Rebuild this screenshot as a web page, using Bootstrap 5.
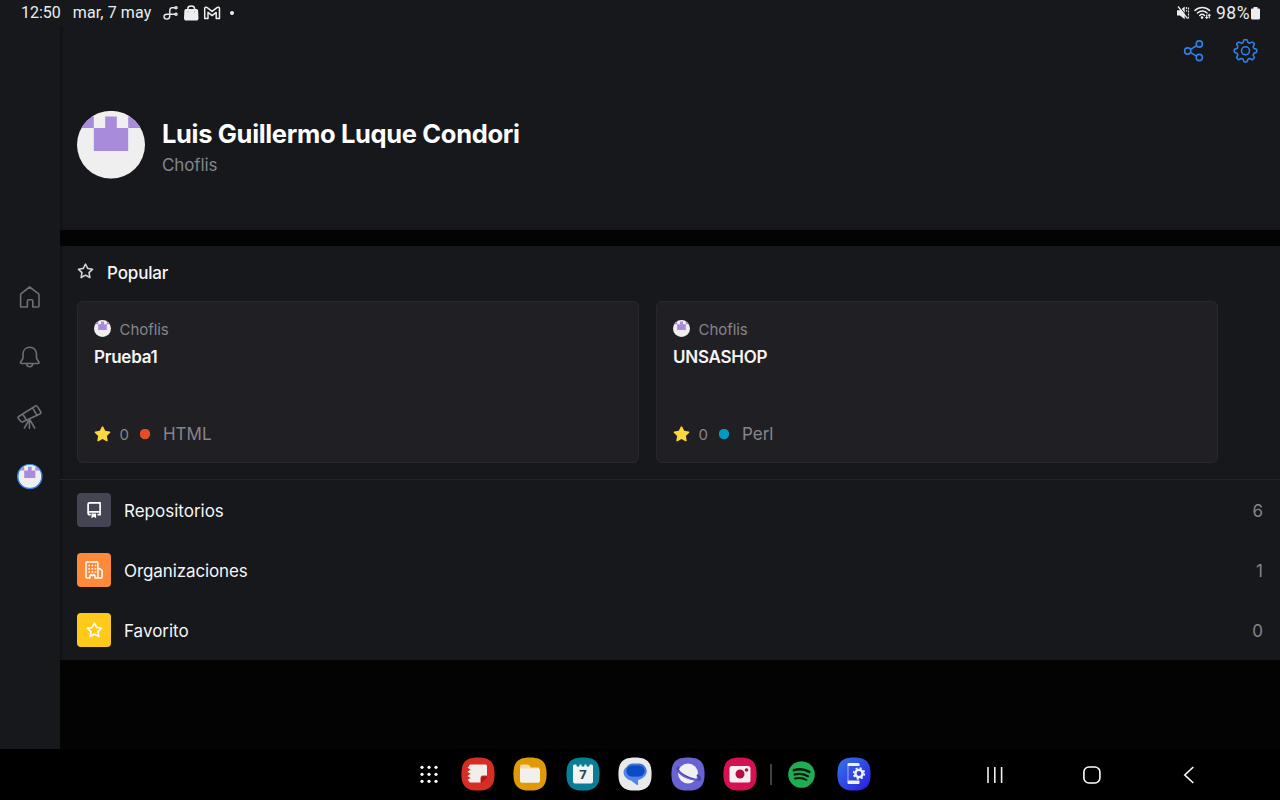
<!DOCTYPE html>
<html lang="es">
<head>
<meta charset="utf-8">
<meta name="viewport" content="width=device-width, initial-scale=1">
<title>Perfil</title>
<link href="https://cdn.jsdelivr.net/npm/bootstrap@5.3.0/dist/css/bootstrap.min.css" rel="stylesheet">
<style>
body{width:1280px;height:800px;overflow:hidden;background:#030303;color:#f5f5f7;font-family:Inter,Roboto,sans-serif;font-size:17px;line-height:24px}
svg{display:block;flex:none}
.surface{background:#17181c}
.statusbar{height:26px;padding:0 20px 0 21px;font-family:Roboto,sans-serif;font-size:16px;color:#ececee}
.percent{font-size:17.500px;letter-spacing:.5px;margin:0 1px 0 2px}
.rail{width:60px;padding-top:259px;gap:33.500px;color:#6e6d78}
.pane{box-shadow:inset 3px 0 2px -1px #101115}
.profile{height:204px;padding:24px 0 0 17px}
.tools{position:absolute;top:12px;right:22px;color:#2f81e8}
.fullname{font-size:25.500px;line-height:32px;font-weight:700;letter-spacing:-.34px;color:#fff}
.dim{color:#85858c}
.band{height:16px;background:#030303}
.popular{height:234px;padding:14px 0 0 17px;border-bottom:1px solid #25262b}
.repo{width:562px;height:162px;background:#201f24;border:1px solid #29282e;border-radius:6px;padding:15px 16px 16px}
.owner{font-size:15px;line-height:24px}
.owner svg{margin-top:-1px;margin-right:8.500px}
.owner span{margin:1px 0 -1px;letter-spacing:-.05px}
.reponame{font-size:17px;line-height:24px;font-weight:600;margin-top:4px;letter-spacing:-.25px}
.dot{width:11px;height:11px}
.entry{height:60px;padding:0 17px}
.entry span{margin-top:2px}
.tile{width:34px;height:34px;border-radius:4px;color:#fff}
.taskbar{height:51px;background:#000}
</style>
</head>
<body class="d-flex flex-column">
<svg width="0" height="0" class="position-absolute">
  <symbol id="avatar" viewBox="0 0 68 68">
    <clipPath id="round"><circle cx="34" cy="34" r="34"/></clipPath>
    <g clip-path="url(#round)"><path fill="#efefef" d="M0 0h68v68H0z"/><path fill="#a98bdb" d="M0 5.700h16.800v11.600H0zM51.200 5.700H68v11.600H51.200zM28.200 5.700h11.600v11.600h11.400v23H16.800v-23h11.400z"/></g>
  </symbol>
  <symbol id="star" viewBox="0 0 16 16"><path fill="currentColor" fill-rule="evenodd" d="M8 .25a.75.75 0 0 1 .673.418l1.882 3.815 4.21.612a.75.75 0 0 1 .416 1.279l-3.046 2.970.719 4.192a.751.751 0 0 1-1.088.791L8 12.347l-3.766 1.980a.75.75 0 0 1-1.088-.79l.72-4.194L.818 6.374a.75.75 0 0 1 .416-1.280l4.210-.611L7.327.668A.75.75 0 0 1 8 .25Zm0 2.445L6.615 5.500a.75.75 0 0 1-.564.41l-3.097.45 2.240 2.184a.75.75 0 0 1 .216.664l-.528 3.084 2.769-1.456a.75.75 0 0 1 .698 0l2.770 1.456-.53-3.084a.75.75 0 0 1 .216-.664l2.240-2.183-3.096-.45a.75.75 0 0 1-.564-.41L8 2.694Z"/></symbol>
  <symbol id="starfill" viewBox="0 0 16 16"><path fill="#fdd73f" d="M8 .25a.75.75 0 0 1 .673.418l1.882 3.815 4.210.612a.75.75 0 0 1 .416 1.279l-3.046 2.970.719 4.192a.751.751 0 0 1-1.088.791L8 12.347l-3.766 1.980a.75.75 0 0 1-1.088-.79l.72-4.194L.818 6.374a.75.75 0 0 1 .416-1.280l4.210-.611L7.327.668A.75.75 0 0 1 8 .25Z"/></symbol>
  <symbol id="squircle" viewBox="0 0 34 34"><path d="M17 .4C29 .4 33.600 5 33.600 17S29 33.600 17 33.600.4 29 .4 17 5 .4 17 .4Z"/></symbol>
</svg>

<header class="statusbar surface d-flex align-items-center flex-shrink-0">
  <span>12:50</span><span style="margin-left:12px;letter-spacing:.1px">mar, 7 may</span>
  <svg style="margin-left:7px" width="80" height="18" viewBox="159 4 80 18" fill="none">
    <g stroke="#e8e8e8" stroke-width="1.400"><path d="M176.300 7.800h-3.300c-2 0-2.200 1.400-2.200 3v5c0 2-1 3.300-2.900 3.300-1.700 0-2.900-1-2.900-2.500s1.200-2.300 2.900-2.300h8.300"/><circle cx="177" cy="7.800" r="1.100"/><circle cx="177" cy="14.300" r="1.100"/></g>
    <path fill="#eee" d="M187.400 9h9.700c1.200 0 1.900.5 2 1.600l.4 7.200c.1 2-.9 2.800-2.500 2.800h-9.500c-1.600 0-2.600-.8-2.500-2.800l.4-7.200c.1-1.100.8-1.600 2-1.600Z"/>
    <path stroke="#eee" stroke-width="1.500" d="M188.800 10V8.800c0-3.600 6.800-3.600 6.800 0V10"/><path stroke="#999" d="M189 11.300v1M195.500 11.300v1"/>
    <path stroke="#eee" stroke-width="1.500" stroke-linejoin="round" d="M205.700 18.600V8.600c0-1.400 1.500-1.800 2.500-1l4.900 3.800 4.900-3.800c1-.8 2.500-.4 2.500 1v10h-3.300v-6.200l-4.100 3.200-4.100-3.200v6.200Z"/>
    <circle cx="233" cy="13" r="2" fill="#eee"/>
  </svg>
  <div class="d-flex align-items-center ms-auto">
    <svg width="38" height="18" viewBox="1175 4 38 18" fill="none">
      <path fill="#eee" d="M1176 10.300h3l4.700-3.800v12.700l-4.700-3.800h-3z"/><path stroke="#17181c" stroke-width="1" d="m1178.500 6.500 9 12"/><path stroke="#eee" stroke-width="1.300" d="m1177 6.500 9.600 12.200"/><path stroke="#ddd" stroke-width="1.200" d="M1185.500 7v4.500M1187.500 7.500v11" stroke-dasharray="2 1"/>
      <g stroke="#eee" stroke-width="1.500" stroke-linecap="round"><path d="M1194 10.400c4-4 10.500-4 14.500 0M1196.400 13c2.800-2.800 7-2.800 9.700 0M1198.700 15.500c1.500-1.500 3.300-1.500 4.800 0"/></g>
      <circle cx="1201" cy="17.600" r="1.300" fill="#eee"/><path fill="#eee" d="m1205.700 19.300-1.800-2.200h1.200v-2.600h1.200v2.600h1.200zM1208.300 13.500l1.800 2.200h-1.200v2.600h-1.200v-2.600h-1.200z"/>
    </svg>
    <span class="percent">98%</span>
    <svg width="9" height="13" viewBox="0 0 9 13"><path fill="#eee" d="M2.500 0h4v1.500H8q1 0 1 1V11q0 1.500-1.500 1.500h-6Q0 12.500 0 11V2.500q0-1 1-1h1.500z"/></svg>
  </div>
</header>

<div class="d-flex flex-grow-1">
  <nav class="rail surface d-flex flex-column align-items-center flex-shrink-0">
    <svg width="26" height="26" viewBox="0 0 26 26" fill="none" stroke="currentColor" stroke-width="1.600" stroke-linejoin="round"><path d="M3.600 22V9.800q0-.7.600-1.200L12.600 2l8.800 6.600q.6.500.6 1.200V21q0 1-1 1h-5.200v-6q0-1.200-1.200-1.200h-3q-1.200 0-1.200 1.200v6H3.600Z"/></svg>
    <svg width="26" height="26" viewBox="0 0.500 26 26" fill="none" stroke="currentColor" stroke-width="1.600" stroke-linejoin="round"><path d="M12.700 2.800c-4 0-6.700 2.900-6.700 6.800v3.300q0 1-.6 1.900L3.700 17.500q-.8 1.500.8 1.500H21q1.600 0 .8-1.500l-1.700-2.700q-.6-.9-.6-1.900V9.600c0-3.900-2.800-6.800-6.800-6.800ZM9.700 19.200c.3 4.100 5.700 4.100 6 0"/></svg>
    <svg width="26" height="26" viewBox="0 0 26 26" fill="none" stroke="currentColor" stroke-width="1.600" stroke-linejoin="round" stroke-linecap="round"><path d="M1.700 12.500 18 2.200q1.600-1 2.500.5l3.200 5q.8 1.500-.8 2.400L6 17.800q-1.500.7-2.400-.7l-2.200-2.700q-.8-1.200.3-1.900ZM5.800 10.300l3.600 5.700M15.700 4l4.300 7.400M12.400 16v8.500M12 16l-4.600 8M13 16l4.700 8"/></svg>
    <svg width="26" height="26" viewBox="0 0 26 26"><circle cx="12.800" cy="12.500" r="12" fill="#fff" stroke="#3487e5" stroke-width="1.500"/><use href="#avatar" x="1.800" y="1" width="22" height="22"/></svg>
  </nav>

  <main class="flex-grow-1">
    <section class="profile surface pane position-relative d-flex align-items-center">
      <div class="tools d-flex align-items-center">
        <svg width="24" height="26" viewBox="0 0 24 26" fill="none" stroke="currentColor" stroke-width="1.600" style="margin-right:27px"><circle cx="5.700" cy="13" r="3.100"/><circle cx="17.300" cy="6" r="3.100"/><circle cx="17.300" cy="19.500" r="3.100"/><path d="m8.500 11.400 6.200-3.700M8.500 14.600l6.200 3.500"/></svg>
        <svg width="25" height="25" viewBox="-12.500 -11.800 25 25" fill="none" stroke="currentColor" stroke-width="1.600" stroke-linejoin="round"><path d="M-2.400-8.500-1.700-10.500Q-1.500-11.200-.8-11.200H.8Q1.500-11.200 1.700-10.500L2.400-8.500Q3.300-7.700 4.300-7.700L6.200-8.700Q6.800-9 7.400-8.500L8.500-7.400Q9-6.800 8.700-6.200L7.700-4.300Q7.700-3.300 8.500-2.400L10.500-1.700Q11.200-1.500 11.200-.8V.8Q11.200 1.500 10.500 1.700L8.500 2.400Q7.700 3.300 7.700 4.300L8.700 6.200Q9 6.800 8.500 7.400L7.400 8.500Q6.800 9 6.200 8.700L4.300 7.700Q3.300 7.700 2.400 8.500L1.700 10.500Q1.500 11.200.8 11.200H-.8Q-1.500 11.200-1.700 10.500L-2.400 8.500Q-3.300 7.700-4.300 7.700L-6.200 8.700Q-6.800 9-7.400 8.500L-8.500 7.400Q-9 6.800-8.700 6.200L-7.700 4.300Q-7.700 3.300-8.500 2.400L-10.500 1.700Q-11.200 1.500-11.200.8V-.8Q-11.200-1.500-10.500-1.700L-8.500-2.400Q-7.700-3.300-7.700-4.300L-8.700-6.200Q-9-6.800-8.500-7.400L-7.400-8.500Q-6.800-9-6.200-8.700L-4.300-7.700Q-3.300-7.700-2.400-8.500Z"/><circle r="4"/></svg>
      </div>
      <svg style="margin-top:9px" width="68" height="68" viewBox="0 0.300 68 68" overflow="visible"><use href="#avatar" width="68" height="68"/></svg>
      <div style="margin-left:17px;margin-top:13px">
        <div class="fullname">Luis Guillermo Luque Condori</div>
        <div class="dim" style="margin-top:3px;margin-bottom:-1px;letter-spacing:-.1px">Choflis</div>
      </div>
    </section>
    <div class="band"></div>
    <section class="popular surface pane">
      <div class="d-flex align-items-center" style="margin-bottom:17px"><svg width="17" height="17" style="margin-right:13px;margin-top:-1px;color:#d4d4d8"><use href="#star"/></svg><span style="font-weight:500;letter-spacing:-.15px;margin:1px 0 -1px">Popular</span></div>
      <div class="d-flex" style="gap:17px">
        <article class="repo d-flex flex-column">
          <div class="owner dim d-flex align-items-center"><svg width="17" height="17"><use href="#avatar"/></svg><span>Choflis</span></div>
          <div class="reponame">Prueba1</div>
          <div class="dim d-flex align-items-center mt-auto"><svg width="17" height="17"><use href="#starfill"/></svg><span class="owner" style="margin:1px 11.500px -1px 8.500px">0</span><svg class="dot" viewBox="0 0 11 11"><circle cx="5" cy="5" r="5.200" fill="#e44d26"/></svg><span style="margin-left:11.500px">HTML</span></div>
        </article>
        <article class="repo d-flex flex-column">
          <div class="owner dim d-flex align-items-center"><svg width="17" height="17"><use href="#avatar"/></svg><span>Choflis</span></div>
          <div class="reponame">UNSASHOP</div>
          <div class="dim d-flex align-items-center mt-auto"><svg width="17" height="17"><use href="#starfill"/></svg><span class="owner" style="margin:1px 11.500px -1px 8.500px">0</span><svg class="dot" viewBox="0 0 11 11"><circle cx="5" cy="5" r="5.200" fill="#0298c3"/></svg><span style="margin-left:11.500px">Perl</span></div>
        </article>
      </div>
    </section>
    <section class="surface pane">
      <div class="entry d-flex align-items-center">
        <div class="tile d-flex align-items-center justify-content-center" style="background:#454452"><svg width="17" height="17" viewBox="0.500 0.500 17 17" fill="none" stroke="currentColor" stroke-width="1.700" stroke-linejoin="round"><path d="M5.300 13.200H4.200Q2.600 13.200 2.600 11.600V2.800Q2.600 1.300 4.200 1.300h10.400v11.900H12M2.700 10.300h11.800"/><path fill="currentColor" stroke="none" d="M6 12h4.600v4.800l-2.300-1.500L6 16.800z"/></svg></div>
        <span style="margin-left:13px">Repositorios</span><span class="dim ms-auto">6</span>
      </div>
      <div class="entry d-flex align-items-center">
        <div class="tile d-flex align-items-center justify-content-center" style="background:#fe8a39"><svg width="19" height="19" viewBox="0.500 0.500 19 19" fill="none" stroke="currentColor" stroke-width="1.500" stroke-linejoin="round"><path d="M2.500 1.500h10q.9 0 .9.900v15.100H10.500v-2.300l-1.200-1.100-1.300 1.100-1.300-1.100-1.200 1.100v2.300H2.400q-.9 0-.9-.9V2.400q0-.9 1-.9ZM13.400 8.200h2.200l2 1.900v6.500q0 .9-.9.900h-3.300"/><path stroke-width="1.500" stroke-dasharray="1.500 1.700" d="M3.900 5h8M3.900 8.200h8M3.900 11.400h8"/></svg></div>
        <span style="margin-left:13px;letter-spacing:-.1px">Organizaciones</span><span class="dim ms-auto">1</span>
      </div>
      <div class="entry d-flex align-items-center">
        <div class="tile d-flex align-items-center justify-content-center" style="background:#ffca19"><svg width="17" height="17"><use href="#star"/></svg></div>
        <span style="margin-left:13px">Favorito</span><span class="dim ms-auto">0</span>
      </div>
    </section>
  </main>
</div>

<footer class="taskbar d-flex align-items-center flex-shrink-0">
  <svg width="19" height="19" viewBox="0 0 19 19" fill="#fff" style="margin-left:420px"><circle cx="2" cy="2.300" r="1.600"/><circle cx="9" cy="2.300" r="1.600"/><circle cx="16" cy="2.300" r="1.600"/><circle cx="2" cy="9.300" r="1.600"/><circle cx="9" cy="9.300" r="1.600"/><circle cx="16" cy="9.300" r="1.600"/><circle cx="2" cy="16.300" r="1.600"/><circle cx="9" cy="16.300" r="1.600"/><circle cx="16" cy="16.300" r="1.600"/></svg>
  <div class="d-flex" style="gap:18.500px;margin-left:21.500px;margin-top:-1px">
    <svg width="34" height="34" viewBox="0 0 34 34"><use href="#squircle" fill="#d52e24"/><path fill="#f1eeeb" d="M9.500 7.500h15q1.500 0 1.500 1.500v9.500h-4q-2.500 0-2.500 2.500v4.500h-10Q8 25.500 8 24V9q0-1.500 1.500-1.500Z"/><path fill="#a31c17" d="M26 19.500v1l-5.200 5h-.6V21.500q0-2 2-2z"/><path stroke="#f1eeeb" stroke-width="1.600" stroke-linecap="round" d="M7.500 10.500h3M7.500 14.700h3M7.500 19h3M7.500 23h3"/><path fill="#d52e24" d="M8 12h1.300v1.300H8zM8 16.200h1.300v1.300H8zM8 20.300h1.300v1.300H8z"/></svg>
    <svg width="34" height="34" viewBox="0 0 34 34"><use href="#squircle" fill="#e09a08"/><path fill="#f6dba6" d="M7 9q0-1.500 1.500-1.500h6q1 0 1.700.8L18 10.500h8V14H7z"/><path fill="#f2f0ec" d="M7 11.500h18.500q1.500 0 1.500 1.500v11q0 1.800-1.800 1.800H8.700Q7 25.800 7 24z"/></svg>
    <svg width="34" height="34" viewBox="0 0 34 34"><use href="#squircle" fill="#087f96"/><path fill="#f2f2f0" d="M8.500 7.500h17q1.500 0 1.500 1.500v15.500q0 2-2 2H9q-2 0-2-2V9q0-1.500 1.500-1.500Z"/><g fill="#087f96"><circle cx="12" cy="8" r="1.700"/><circle cx="17" cy="8" r="1.700"/><circle cx="22" cy="8" r="1.700"/></g><text x="17" y="22" text-anchor="middle" font-family="Open Sans" font-weight="700" font-size="13" fill="#1c4a5d">7</text></svg>
    <svg width="34" height="34" viewBox="0 0 34 34"><use href="#squircle" fill="#eaeaeb"/><path fill="#5385ed" d="M11.500 9h11c7 0 8 6.500 4 10.500-2 2-4 3-6.500 3.500l.3 4q0 1.300-1.400.9L13 23.500C6 22 3 14 8 10.500Q9.500 9 11.500 9Z"/><rect x="8" y="6.500" width="20" height="13" rx="6.500" fill="#3c75dc"/><rect x="8.500" y="8.500" width="18" height="11" rx="5.500" fill="#0b4bc4"/></svg>
    <svg width="34" height="34" viewBox="0 0 34 34"><use href="#squircle" fill="#6862d2"/><circle cx="17" cy="16.500" r="10" fill="#f0eff4"/><path fill="none" stroke="#4a43a9" stroke-width="2.200" d="M8 10.500c-2.500 0-2 4 5 8s15.500 5.500 16 3.200c.3-1-1-2.300-3-3.700"/><path fill="none" stroke="#6862d2" stroke-width="1.500" d="M6.500 13.500c4 6 14 10 20 9.500"/></svg>
    <svg width="34" height="34" viewBox="0 0 34 34"><use href="#squircle" fill="#d51154"/><rect x="6.500" y="9" width="21" height="16.500" rx="2.500" fill="#f5eff1"/><circle cx="17" cy="17" r="4.500" fill="#b80c46"/><circle cx="23.500" cy="13" r="1.800" fill="#b80c46"/></svg>
  </div>
  <div style="width:2px;height:21px;background:#414141;margin-left:12.500px;margin-top:-1px"></div>
  <svg width="27" height="27" viewBox="0 0 27 27" style="margin-left:16px;margin-top:-1px" fill="none" stroke="#06170c" stroke-linecap="round"><circle cx="13.500" cy="13.500" r="13.300" fill="#1eae51" stroke="none"/><path stroke-width="2.500" d="M5.800 9.200c5-1.500 11.200-.9 15.600 1.700"/><path stroke-width="2.200" d="M6.500 13.500c4.500-1.200 9.600-.6 13.400 1.700"/><path stroke-width="1.800" d="M7 17.500c4-.9 8.200-.5 11.500 1.500"/></svg>
  <svg width="34" height="34" viewBox="0 0 34 34" style="margin-left:22px;margin-top:-1px"><defs><linearGradient id="blue" y2="1"><stop stop-color="#3673e8"/><stop offset="1" stop-color="#281dde"/></linearGradient></defs><use href="#squircle" fill="url(#blue)"/><path fill="#f0f0fa" d="M11.500 6h10q1 0 1 1v2h-12V7q0-1 1-1ZM10.500 23.500h12V26q0 1-1 1h-10q-1 0-1-1z"/><path stroke="#b9c3f4" d="M11 9v15" stroke-width=".8"/><g transform="translate(22 16.500)" fill="none" stroke="#f3f3fb"><circle r="3.600" stroke-width="2.400"/><circle r="5.300" stroke-width="1.800" stroke-dasharray="2.081 2.081"/></g></svg>
  <svg width="22" height="22" viewBox="0 0 22 22" fill="none" stroke="#eee" stroke-width="1.600" style="margin-left:113.500px"><path d="M4 3v16M10.800 3v16M17.600 3v16"/></svg>
  <svg width="22" height="22" viewBox="0 0 22 22" fill="none" stroke="#fff" stroke-width="1.600" style="margin-left:75px"><rect x="2.900" y="3" width="16" height="16" rx="5"/></svg>
  <svg width="22" height="22" viewBox="0 0 22 22" fill="none" stroke="#fff" stroke-width="1.600" style="margin-left:75px"><path d="m15.300 3-8.500 8 8.500 8"/></svg>
</footer>
<script src="https://cdn.jsdelivr.net/npm/bootstrap@5.3.0/dist/js/bootstrap.bundle.min.js"></script>
</body>
</html>
